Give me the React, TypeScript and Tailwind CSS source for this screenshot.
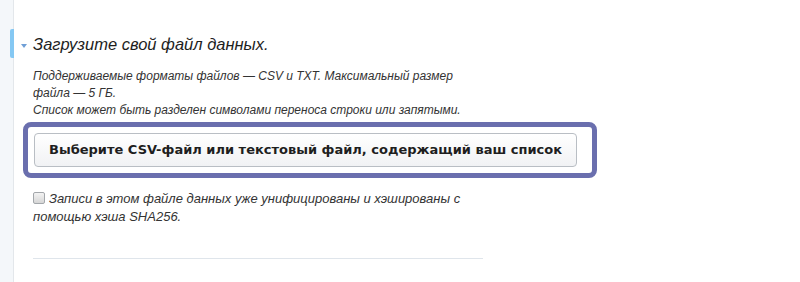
import React from "react";

const sans = { fontFamily: '"Liberation Sans", Arial, sans-serif' };

export default function App(): JSX.Element {
  return (
    <div className="flex h-[282px] w-[800px] bg-white text-[#333]" style={sans}>
      {/* left rail */}
      <div className="relative w-[14px] shrink-0 border-r border-[#e3e7eb] bg-[#f4f7fa]">
        <div className="absolute left-[10px] top-[29px] h-[29px] w-[4px] rounded-l-[2px] bg-[#85c8f3]" />
      </div>

      <div className="relative flex flex-col pl-[19px]">
        {/* collapse marker */}
        <div className="absolute left-[7px] top-[44px] h-0 w-0 border-x-[3px] border-t-[4px] border-x-transparent border-t-[#6f9fd6]" />

        <h2 className="pt-[32px] text-[16.5px] italic leading-[24px] text-[#1e1e1e]">
          Загрузите свой файл данных.
        </h2>

        <div className="mt-[12px] w-[440px] text-[12px] italic leading-[17px] text-[#333]">
          <p>Поддерживаемые форматы файлов — CSV и TXT. Максимальный размер файла — 5 ГБ.</p>
          <p>Список может быть разделен символами переноса строки или запятыми.</p>
        </div>

        <div className="-ml-[10px] mt-[3px] w-[574px] rounded-[8px] border-[5px] border-[#6a6fae] py-[6px] pl-[6px] pr-[15px]">
          <button
            type="button"
            className="flex h-[34px] w-full items-center justify-center rounded-[4px] border border-[#b9bec4] bg-gradient-to-b from-white to-[#f1f2f4] text-[13px] font-bold text-[#1e1e1e]"
            style={{ fontFamily: '"DejaVu Sans", Verdana, sans-serif' }}
          >
            Выберите CSV-файл или текстовый файл, содержащий ваш список
          </button>
        </div>

        <label className="mt-[12px] block w-[450px] text-[13px] italic leading-[18px] text-[#333]">
          <span className="mr-[4px] inline-block h-[12px] w-[12px] translate-y-[1px] rounded-[2px] border border-[#a3a7ab] bg-gradient-to-b from-[#f3f3f3] to-[#d6d6d6] align-baseline" />
          Записи в этом файле данных уже унифицированы и хэшированы с помощью хэша SHA256.
        </label>

        <div className="mt-[32px] h-px w-[450px] bg-[#dfe5eb]" />
      </div>
    </div>
  );
}
